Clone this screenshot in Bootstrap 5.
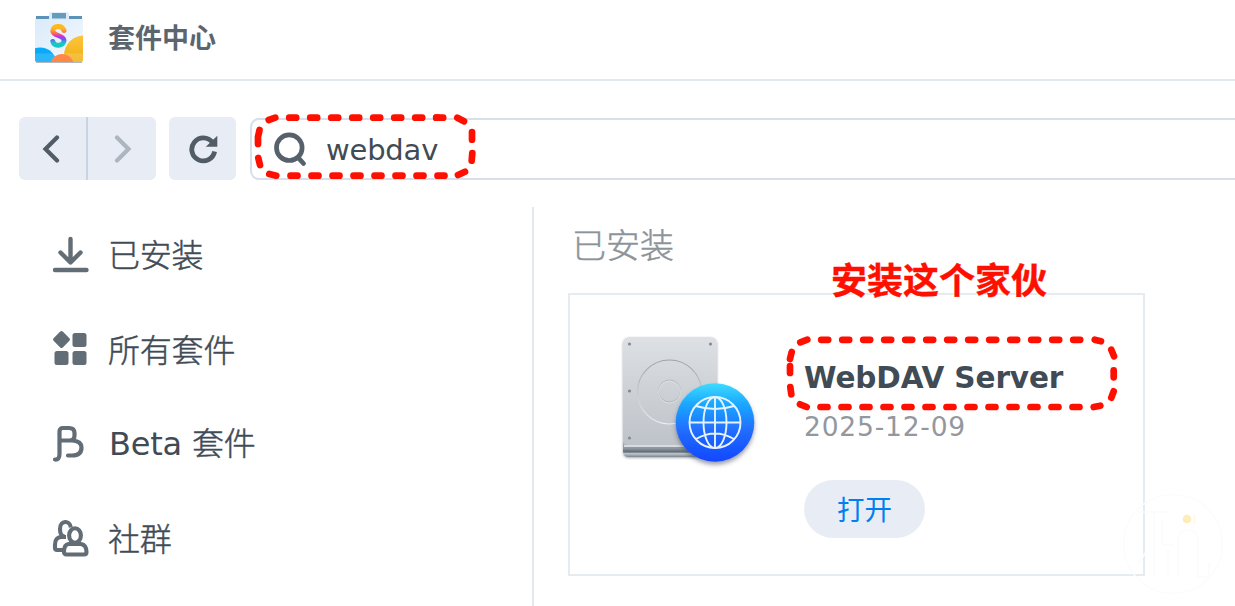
<!DOCTYPE html>
<html lang="zh-CN">
<head>
<meta charset="utf-8">
<meta name="viewport" content="width=device-width, initial-scale=1">
<title>套件中心</title>
<link href="https://cdn.jsdelivr.net/npm/bootstrap@5.3.0/dist/css/bootstrap.min.css" rel="stylesheet">
<style>
body{font-family:"DejaVu Sans","Noto Sans CJK SC",sans-serif;color:#414b55;background:#fff;width:1235px;height:606px}
svg{display:block;flex:none}
.cjk{font-family:"Noto Sans CJK SC",sans-serif}
.topbar{height:81px;border-bottom:2px solid #e1e8ee;padding:0 0 2px 34px}
.topbar .app-name{font-size:27px;line-height:40px;font-weight:700;color:#5b656f;margin-left:24px;margin-top:-3px}
.toolbar{height:126px;padding:36px 0 27px 19px}
.tool{background:#e8edf5;border:0;border-radius:6px;width:67px;height:63px;padding:0}
.tool-pair .tool:first-child{border-right:2px solid #c8d4e1;border-radius:6px 0 0 6px;width:69px;padding-right:4px}
.tool-pair .tool:last-child{border-radius:0 6px 6px 0;width:68px;padding-left:2px}
.reload{margin-left:13px}
.search{height:62px;margin:1px 0 0 14px;border:2px solid #d5e0ea;border-right:0;border-radius:9px 0 0 9px;padding-left:22px}
.search span{font-size:29px;margin-left:18px;padding-top:3px;letter-spacing:-.2px}
.side{width:534px;height:399px;border-right:2px solid #e1e8ee;padding-left:52px}
.side a{height:94.8px;color:#414b55;font-size:32px;letter-spacing:-.2px}
.side a span{margin-left:19px;padding-bottom:3px}
.side .cjk,.content h2{font-weight:300;-webkit-text-stroke:.45px currentColor}
.side a .mixed{padding-bottom:2px;margin-left:20px}
.content{padding:13px 0 0 34px}
.content h2{font-size:34px;line-height:48px;color:#8c9399;margin:0 0 25px 4px}
.pkg{width:577px;height:283px;border:2px solid #e6ebf0;padding:40px 0 0 50px}
.pkg .info{margin-left:44px;padding-top:21px}
.pkg h3{font-size:29.5px;line-height:44px;font-weight:700;margin:0;letter-spacing:-.1px}
.pkg time{font-size:26.5px;line-height:36px;color:#92989e;margin-top:9px;letter-spacing:.8px}
.open-btn{background:#e8edf5;color:#0080f0;border-radius:29px;width:121px;height:58px;border:0;font-size:27.5px;margin-top:35px;padding:0}
.callout{left:831px;top:252px;font-size:36px;line-height:52px;font-weight:700;color:#ff0f00;-webkit-text-stroke:.4px #ff0f00;text-shadow:0 0 2px #fff,0 0 2px #fff}
.overlay{left:0;top:0;pointer-events:none}
</style>
</head>
<body class="overflow-hidden position-relative">
<header class="topbar d-flex align-items-center">
<svg width="50" height="52" viewBox="0 0 50 52" overflow="visible">
<defs>
<clipPath id="bag"><path d="M1 6H49V47Q49 49 46 49H4Q1 49 1 47Z"/></clipPath>
<linearGradient id="paper" x2="1" y2="1"><stop stop-color="#d9eafa"/><stop offset="1" stop-color="#f5faff"/></linearGradient>
<linearGradient id="sun" x2="0" y2="1"><stop stop-color="#ffc33c"/><stop offset=".7" stop-color="#edb012"/></linearGradient>
<linearGradient id="ess" x2="0" y2="1"><stop offset=".1" stop-color="#ffb91c"/><stop offset=".38" stop-color="#ff6550"/><stop offset=".52" stop-color="#c82de8"/><stop offset=".68" stop-color="#6f56f0"/><stop offset=".88" stop-color="#16c8c4"/></linearGradient>
</defs>
<path d="M2 48.500H48V50H2Z" fill="#b4b8bc"/>
<g clip-path="url(#bag)"><path d="M0 5H50V50H0Z" fill="url(#paper)"/><circle cx="6" cy="51.500" r="17" fill="#08aafa"/><circle cx="50" cy="42.500" r="20" fill="url(#sun)"/><circle cx="28" cy="53" r="12" fill="#ff7328"/><path d="M0 40.500H50V50H0Z" fill="#fff" opacity=".15"/></g>
<path d="M2 3H15V6H2ZM35 3H48V6H35Z" fill="#5c92b7"/><path d="M15 0Q15 -.8 17 -.8H33Q35 -.8 35 0V7H15Z" fill="#dcebf8"/><path d="M18 0H32V5.500H18Z" fill="#659bbd"/>
<path d="M30 17.500C28 11.500 18.500 12.500 18.800 18C19.200 23 30 22 30 27.500C30 33.500 20 34 18.800 28.500" fill="none" stroke="url(#ess)" stroke-width="5" stroke-linecap="round"/>
</svg>
<div class="app-name cjk">套件中心</div>
</header>
<div class="toolbar d-flex">
<div class="tool-pair d-flex">
<button class="tool d-flex align-items-center justify-content-center" aria-label="back"><svg width="18" height="28" viewBox="0 0 18 28"><path d="M15 2.500L3.500 14L15 25.500" fill="none" stroke="#515c66" stroke-width="4.200" stroke-linecap="round"/></svg></button>
<button class="tool d-flex align-items-center justify-content-center" aria-label="forward"><svg width="18" height="28" viewBox="0 0 18 28"><path d="M3 2.500L14.500 14L3 25.500" fill="none" stroke="#adb6bf" stroke-width="4.200" stroke-linecap="round"/></svg></button>
</div>
<button class="tool reload flex-shrink-0 d-flex align-items-center justify-content-center" aria-label="reload"><svg width="30" height="30" viewBox="0 0 30 30"><path d="M26.600 17.500A11.500 11.500 0 1 1 24.500 8.500" fill="none" stroke="#515c66" stroke-width="4.800"/><path d="M29.300 1.800V12.800H17.800Z" fill="#515c66"/></svg></button>
<div class="search flex-grow-1 d-flex align-items-center">
<svg width="34" height="36" viewBox="0 0 34 36"><circle cx="15.300" cy="16.700" r="12.800" fill="none" stroke="#56616b" stroke-width="4.700"/><path d="M24.500 27L29.500 32.500" stroke="#56616b" stroke-width="4.800" stroke-linecap="round"/></svg>
<span>webdav</span></div>
</div>
<main class="d-flex">
<nav class="side flex-shrink-0">
<a class="d-flex align-items-center text-decoration-none" href="#"><svg width="37" height="38" viewBox="0 0 37 38"><path d="M18.500 4V27M8.500 17.500L18.500 27.500L28.500 17.500M3 35H34.500" fill="none" stroke="#636d76" stroke-width="4.400" stroke-linecap="round" stroke-linejoin="round"/></svg><span class="cjk">已安装</span></a>
<a class="d-flex align-items-center text-decoration-none" href="#"><svg width="37" height="38" viewBox="0 0 37 38"><g fill="#636d76"><rect x="3" y="3" width="13" height="13" rx="1.800" transform="rotate(45 9.500 9.500)"/><rect x="20.500" y="3" width="14" height="14" rx="2.500"/><rect x="2.500" y="21" width="14" height="14" rx="2.500"/><rect x="20.500" y="21" width="14" height="14" rx="2.500"/></g></svg><span class="cjk">所有套件</span></a>
<a class="d-flex align-items-center text-decoration-none" href="#"><svg width="37" height="38" viewBox="0 0 37 38"><path d="M3 34.500Q7.500 35 7.500 29V6.500Q7.500 3 11 3H17Q22.500 3 22.500 8V10.500Q22.500 15.500 17.500 15.500H9M17.500 15.500H20Q29.500 16 29.500 22.500Q29.500 30.500 20 30.500H16" fill="none" stroke="#636d76" stroke-width="4.200" stroke-linecap="round" stroke-linejoin="round"/></svg><span class="mixed">Beta <span class="cjk m-0">套件</span></span></a>
<a class="d-flex align-items-center text-decoration-none" href="#"><svg width="37" height="38" viewBox="0 0 37 38" overflow="visible"><g fill="none" stroke="#636d76" stroke-width="4.100"><path d="M12 30H5Q3 30 3 28V24.500Q3 17 10 17H14M18.800 7.500C18 0 8 0 8 9Q8 16.500 13 16.500"/><ellipse cx="23" cy="15.500" rx="5.900" ry="7.200"/><path d="M16.500 24H29Q34.500 25 34.500 32Q34.500 34.500 32 34.500H14.500Q12 34.500 12 32Q12 24.500 16.500 24Z"/></g></svg><span class="cjk">社群</span></a>
</nav>
<section class="content">
<h2 class="cjk">已安装</h2>
<article class="pkg d-flex">
<svg width="140" height="138" viewBox="0 0 140 138" overflow="visible">
<defs>
<linearGradient id="metal" x2="0" y2="1"><stop stop-color="#dde0e4"/><stop offset="1" stop-color="#bec3c9"/></linearGradient>
<linearGradient id="lip" x2="0" y2="1"><stop stop-color="#a9b0b7"/><stop offset=".5" stop-color="#8d969f"/><stop offset=".7" stop-color="#5f6b76"/><stop offset=".8" stop-color="#c0c6cb"/><stop offset="1" stop-color="#7b858e"/></linearGradient>
<linearGradient id="blue" x2="0" y2="1"><stop stop-color="#3ddcff"/><stop offset=".25" stop-color="#1caaff"/><stop offset=".6" stop-color="#216dff"/><stop offset="1" stop-color="#1247ff"/></linearGradient>
<linearGradient id="ring" x2="0" y2="1"><stop stop-color="#9fa3a8"/><stop offset="1" stop-color="#eceef0"/></linearGradient>
<filter id="soft" x="-20%" y="-20%" width="140%" height="150%"><feDropShadow dx="0" dy="3" stdDeviation="2" flood-color="#344252" flood-opacity=".5"/></filter>
<filter id="soft2" x="-20%" y="-20%" width="140%" height="150%"><feDropShadow dx="0" dy="1" stdDeviation="1" flood-color="#344252" flood-opacity=".45"/></filter>
</defs>
<g filter="url(#soft2)"><path d="M3 105V116Q3 122 9 122H91Q97 122 97 116V105Z" fill="url(#lip)"/><path d="M3 9Q3 2 10 2H90Q97 2 97 9V106Q97 110 93 110H7Q3 110 3 106Z" fill="url(#metal)"/></g>
<path d="M4 111H96" stroke="#edf0f2" stroke-width="1.500"/>
<circle cx="49.500" cy="57" r="32" fill="none" stroke="url(#ring)" stroke-width="1.200"/><circle cx="49.500" cy="56" r="11" fill="none" stroke="#aeb3b8" stroke-width=".9"/><circle cx="49.500" cy="57" r="11" fill="none" stroke="#e0e3e6" stroke-width=".8"/>
<g fill="#858b91"><circle cx="9.500" cy="9" r="1.600"/><circle cx="90.500" cy="9" r="1.600"/><circle cx="9.500" cy="56" r="1.600"/><circle cx="9.500" cy="103" r="1.600"/></g>
<circle cx="95" cy="87.500" r="39.300" fill="url(#blue)" filter="url(#soft)"/>
<g fill="none" stroke="#e4f3ff" stroke-width="1.900"><circle cx="95" cy="87.500" r="25.500"/><ellipse cx="95" cy="87.500" rx="11.500" ry="25.500"/><path d="M95 62V113M69.500 87.500H120.500M76 71Q95 77 114 71M76 104Q95 93 114 104"/></g>
</svg>
<div class="info d-flex flex-column align-items-start">
<h3>WebDAV Server</h3>
<time datetime="2025-12-09">2025-12-09</time>
<button class="open-btn cjk">打开</button>
</div>
</article>
</section>
</main>
<div class="callout cjk position-absolute text-nowrap">安装这个家伙</div>
<svg class="overlay position-absolute" width="1235" height="606" viewBox="0 0 1235 606">
<g fill="none" stroke="#fcfcfc" stroke-width="1.500"><circle cx="1173" cy="544" r="49.500"/><path d="M1138 512H1170M1154 512V577M1162 522V545H1174M1168 550V577M1178 577V540Q1178 530 1188 530T1198 540V577H1209V562M1138 565L1147 550"/></g>
<circle cx="1187" cy="519" r="4.300" fill="#fdedb9"/><path d="M1194 515Q1196 520 1194 524" fill="none" stroke="#fdf4d8"/>
<g fill="none" stroke="#ff0f00" stroke-width="6.700" stroke-linecap="round">
<path d="M289.200 117.700H438" stroke-dasharray="7 14"/>
<path d="M290.500 175.700H445" stroke-dasharray="7 14"/>
<path d="M268.700 120L275.300 117.700M457.300 117.700L464 121.300M472 132V139.700M472.300 153L471.700 160.700M465 171.700L458 175M269.300 174L276.300 175.700M258.300 158L260 165M258 138.300V144M259.500 130L258 137M436.200 117.700H443.200"/>
<path d="M821.200 339.800H1081" stroke-dasharray="7 14"/>
<path d="M820.500 407H1080" stroke-dasharray="7 14"/>
<path d="M800.300 342.300L807.300 339.700M1094.700 339.700L1101 341.300M1111.300 349.700L1114 356.300M1113.700 370.300V377.300M1113.700 391.300L1111.300 397.700M1100.300 405.700L1093.700 407M800 404.300L806.700 407M790.300 387L791.300 394.300M790 366V373M790 359L791.700 352"/>
</g>
</svg>
<script src="https://cdn.jsdelivr.net/npm/bootstrap@5.3.0/dist/js/bootstrap.bundle.min.js"></script>
</body>
</html>
